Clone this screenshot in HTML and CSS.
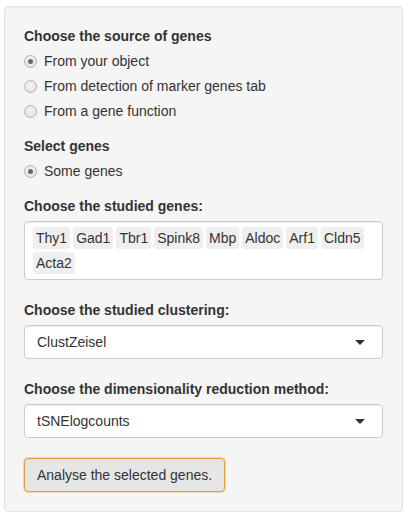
FILE: index.html
```html
<!DOCTYPE html>
<html>
<head>
<meta charset="utf-8">
<link rel="stylesheet" href="styles.css">
</head>
<body>
<div class="page">
  <form class="well">
    <div class="form-group">
      <div class="control-label">Choose the source of genes</div>
      <div class="options">
        <label class="radio"><span class="dot checked"></span><span>From your object</span></label>
        <label class="radio"><span class="dot"></span><span>From detection of marker genes tab</span></label>
        <label class="radio"><span class="dot"></span><span>From a gene function</span></label>
      </div>
    </div>
    <div class="form-group">
      <div class="control-label">Select genes</div>
      <div class="options">
        <label class="radio"><span class="dot checked"></span><span>Some genes</span></label>
      </div>
    </div>
    <div class="form-group selectize-group">
      <div class="control-label">Choose the studied genes:</div>
      <div class="multi">
        <span class="tag">Thy1</span><span class="tag">Gad1</span><span class="tag">Tbr1</span><span class="tag">Spink8</span><span class="tag">Mbp</span><span class="tag">Aldoc</span><span class="tag">Arf1</span><span class="tag">Cldn5</span><span class="tag">Acta2</span>
      </div>
    </div>
    <div class="form-group selectize-group">
      <div class="control-label">Choose the studied clustering:</div>
      <div class="single">ClustZeisel</div>
    </div>
    <div class="form-group selectize-group">
      <div class="control-label">Choose the dimensionality reduction method:</div>
      <div class="single">tSNElogcounts</div>
    </div>
    <div class="actions">
      <button type="button" class="btn">Analyse the selected genes.</button>
    </div>
  </form>
</div>
</body>
</html>
```
FILE: styles.css
```css
html, body {
  margin: 0;
  padding: 0;
  background: #fff;
}
body {
  font-family: "Liberation Sans", Arial, sans-serif;
  font-size: 14px;
  line-height: 20px;
  color: #333;
}
.page {
  padding: 6px 7px 9px 4px;
}
.well {
  display: block;
  margin: 0;
  background: #f5f5f5;
  border: 1px solid #e3e3e3;
  border-radius: 4px;
  box-shadow: inset 0 1px 1px rgba(0,0,0,0.05);
  padding: 19px;
}
.form-group {
  margin-bottom: 15px;
}
.selectize-group {
  padding-bottom: 5px;
}
.control-label {
  font-weight: bold;
  margin-bottom: 5px;
  height: 20px;
}
.options {
  display: flex;
  flex-direction: column;
  gap: 5px;
}
.radio {
  display: flex;
  align-items: center;
  height: 20px;
  gap: 7px;
  padding-left: 0;
}
.dot {
  width: 11px;
  height: 11px;
  border-radius: 50%;
  border: 1px solid #b3b3b3;
  background: radial-gradient(circle at 50% 40%, #f4f4f4 0%, #e0e0e0 100%);
  position: relative;
  flex: none;
}
.dot.checked::after {
  content: "";
  position: absolute;
  left: 3px;
  top: 3px;
  width: 5px;
  height: 5px;
  border-radius: 50%;
  background: #666;
}
.multi {
  background: #fff;
  border: 1px solid #ccc;
  border-radius: 4px;
  box-shadow: inset 0 1px 1px rgba(0,0,0,0.075);
  padding: 5px 9px 2px 8px;
  display: flex;
  flex-wrap: wrap;
}
.tag {
  background: #efefef;
  color: #333;
  padding: 1px 3px;
  margin: 0 3px 3px 0;
  border-radius: 3px;
  line-height: 20px;
}
.single {
  position: relative;
  background: #fff;
  border: 1px solid #ccc;
  border-radius: 4px;
  box-shadow: inset 0 1px 1px rgba(0,0,0,0.075);
  padding: 6px 12px;
  height: 20px;
}
.single::after {
  content: "";
  position: absolute;
  top: 50%;
  right: 17px;
  margin-top: -2px;
  width: 0;
  height: 0;
  border-style: solid;
  border-width: 5px 5px 0 5px;
  border-color: #333 transparent transparent transparent;
}
.actions {
  display: flex;
}
.btn {
  font-family: inherit;
  font-size: 14px;
  line-height: 20px;
  color: #333;
  background: #e6e6e6;
  border: 1px solid #e0a43c;
  border-radius: 4px;
  box-shadow: inset 0 3px 5px rgba(0,0,0,0.02), 0 0 0 1px rgba(224,164,60,0.35);
  padding: 6px 12px;
  margin: 0;
  cursor: pointer;
}
```
